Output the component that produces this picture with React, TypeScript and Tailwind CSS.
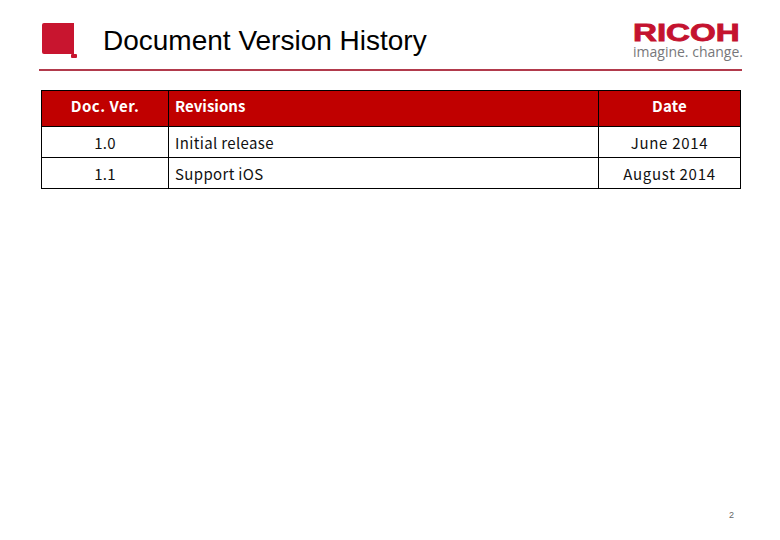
const rows = [
  { ver: "1.0", text: "Initial release", date: "June 2014" },
  { ver: "1.1", text: "Support iOS", date: "August 2014" },
];

const cellFont = "font-['Noto_Sans_CJK_JP',sans-serif] text-[15px]";

function Corner() {
  return (
    <svg width="36" height="36" viewBox="0 0 36 36" className="shrink-0">
      <path d="M2 0H32V31H2Q0 31 0 29V2Q0 0 2 0Z" fill="#c8152f" />
      <rect x="29" y="31" width="6" height="4" rx="1" fill="#c8152f" />
    </svg>
  );
}

function RicohLogo() {
  return (
    <div className="w-[110px] shrink-0">
      <div className="font-bold text-[23px] leading-[18px] text-[#c4122f] origin-left scale-x-[1.44] [-webkit-text-stroke:0.8px_#c4122f]">
        RICOH
      </div>
      <div className="mt-[2px] font-['Open_Sans',sans-serif] text-[14px] leading-[16px] text-[#77777a]">
        imagine. change.
      </div>
    </div>
  );
}

export default function App() {
  return (
    <div className="w-[780px] h-[540px] bg-white flex flex-col overflow-hidden font-['Liberation_Sans',sans-serif]">
      <div className="h-[69px] pl-[42px] pr-[37px] flex items-center justify-between">
        <div className="flex items-center pt-[13px]">
          <Corner />
          <h1 className="ml-[25px] text-[28px] leading-8 text-black">Document Version History</h1>
        </div>
        <div className="pt-[15px]">
          <RicohLogo />
        </div>
      </div>
      <div className="mx-[39px] w-[703px] h-[2px] bg-[#b23a4c]" />

      <table className="ml-[41px] mt-[19px] w-[699px] table-fixed border-collapse">
        <colgroup>
          <col className="w-[127px]" />
          <col className="w-[430px]" />
          <col className="w-[142px]" />
        </colgroup>
        <thead>
          <tr className="h-[36px] bg-[#c00000] text-white">
            <th className={`border border-black font-bold text-center pb-[5px] tracking-[0.5px] ${cellFont}`}>Doc. Ver.</th>
            <th className={`border border-black font-bold text-left pl-[6px] pb-[5px] ${cellFont}`}>Revisions</th>
            <th className={`border border-black font-bold text-center pb-[5px] tracking-[0.2px] ${cellFont}`}>Date</th>
          </tr>
        </thead>
        <tbody>
          {rows.map((row) => (
            <tr key={row.ver} className="h-[31px] text-[#111]">
              <td className={`border border-black text-center pt-[2px] tracking-[0.2px] ${cellFont}`}>{row.ver}</td>
              <td className={`border border-black pl-[6px] pt-[2px] tracking-[0.35px] ${cellFont}`}>{row.text}</td>
              <td className={`border border-black text-center pt-[2px] tracking-[0.7px] ${cellFont}`}>{row.date}</td>
            </tr>
          ))}
        </tbody>
      </table>

      <div className="mt-auto mb-[19px] pr-[46px] text-right text-[9px] leading-3 text-[#666]">2</div>
    </div>
  );
}
